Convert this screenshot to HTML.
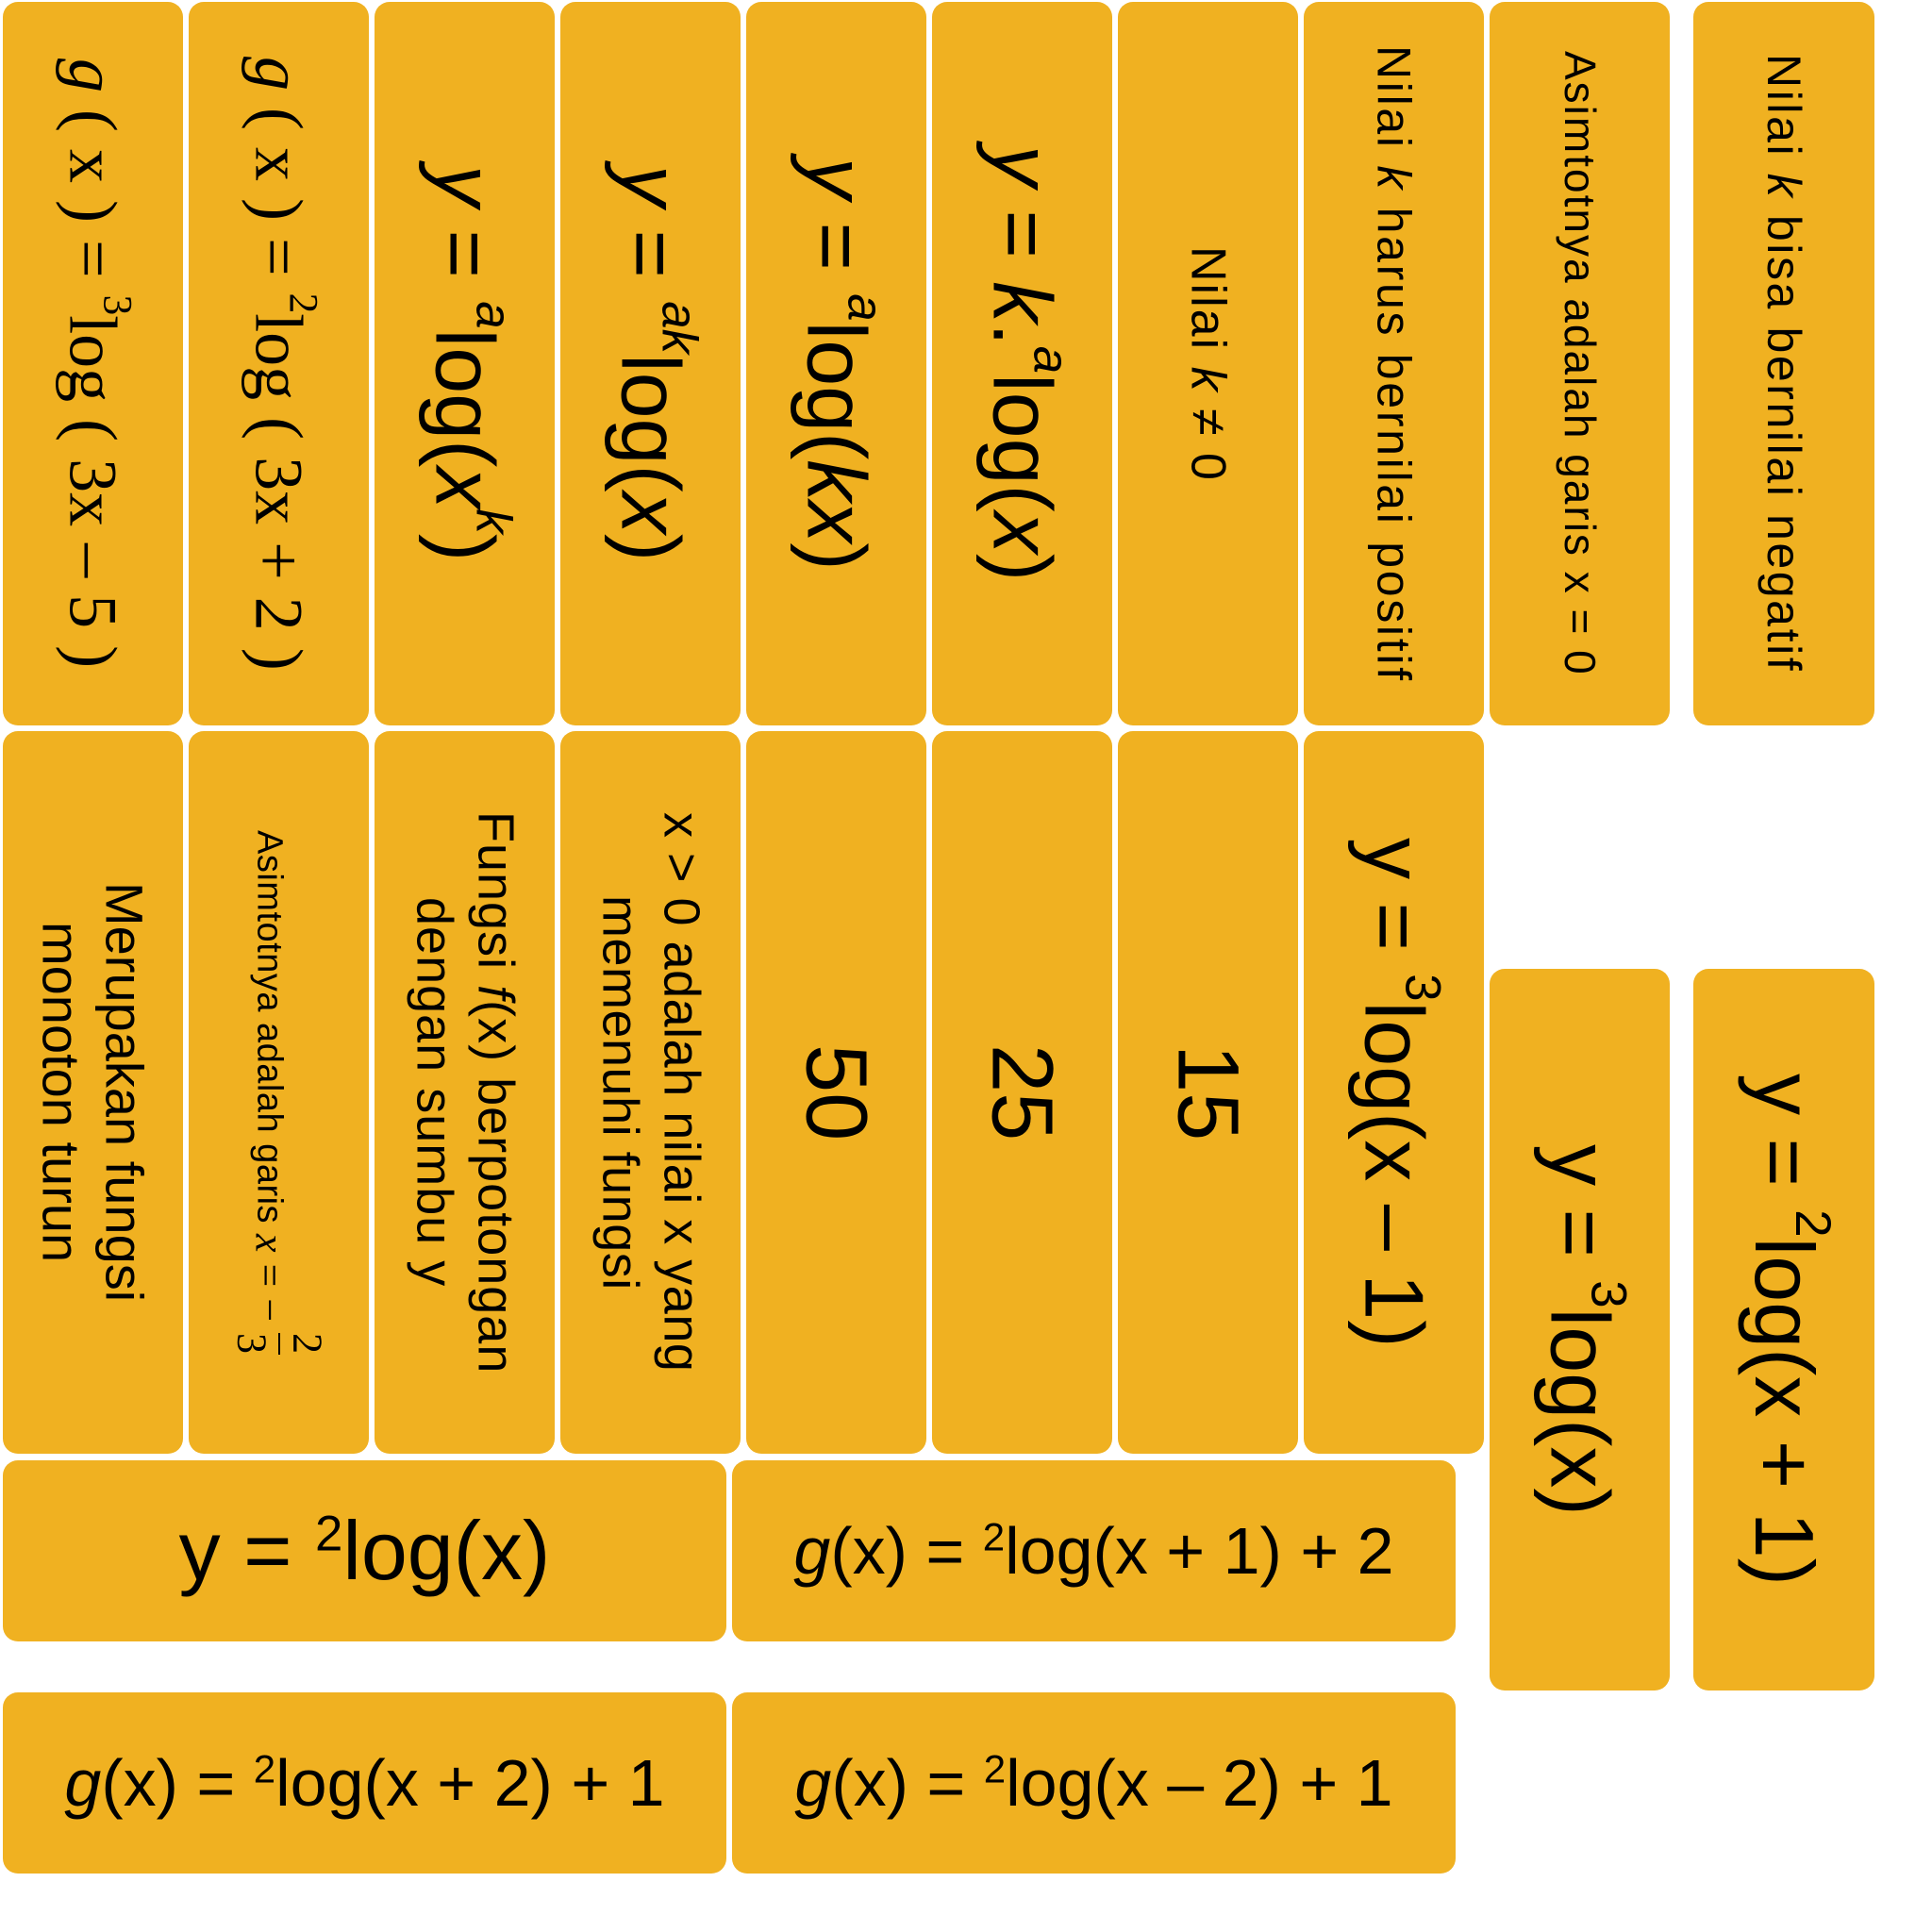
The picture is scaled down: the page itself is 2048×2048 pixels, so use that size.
<!DOCTYPE html>
<html><head><meta charset="utf-8"><style>
html,body{margin:0;padding:0;background:#fff;width:2048px;height:2048px;overflow:hidden}
.c{position:absolute;background:#F0B121;border-radius:16px;display:flex;align-items:center;justify-content:center;color:#000;font-family:"Liberation Sans",sans-serif}
.v{writing-mode:vertical-rl;white-space:nowrap;text-align:center;line-height:1.2}
.h{white-space:nowrap}
.s{font-family:"Liberation Serif",serif;font-size:72px}
.b{font-size:88px}
sup{font-size:.6em;vertical-align:super;line-height:0}
i{font-style:italic}
.fr{display:inline-block;vertical-align:middle}
.fr span{display:block;padding:0 2px}
.fr span:first-child{border-left:2px solid #000}
</style></head><body>
<!-- row 1 -->
<div class="c" style="left:3px;top:2px;width:191px;height:767px"><div class="v s"><i>g</i> ( x ) = <sup>3</sup>log ( 3x – 5 )</div></div>
<div class="c" style="left:200px;top:2px;width:191px;height:767px"><div class="v s"><i>g</i> ( x ) = <sup>2</sup>log ( 3x + 2 )</div></div>
<div class="c" style="left:397px;top:2px;width:191px;height:767px"><div class="v b"><i>y</i> = <sup><i>a</i></sup>log(<i>x</i><sup><i>k</i></sup>)</div></div>
<div class="c" style="left:594px;top:2px;width:191px;height:767px"><div class="v b"><i>y</i> = <sup><i>ak</i></sup>log(<i>x</i>)</div></div>
<div class="c" style="left:791px;top:2px;width:191px;height:767px"><div class="v b"><i>y</i> = <sup><i>a</i></sup>log(<i>kx</i>)</div></div>
<div class="c" style="left:988px;top:2px;width:191px;height:767px"><div class="v b"><i>y</i> = <i>k</i>.<sup><i>a</i></sup>log(<i>x</i>)</div></div>
<div class="c" style="left:1185px;top:2px;width:191px;height:767px"><div class="v" style="font-size:52px;letter-spacing:2px">Nilai <i>k</i> ≠ 0</div></div>
<div class="c" style="left:1382px;top:2px;width:191px;height:767px"><div class="v" style="font-size:50px;letter-spacing:2.7px">Nilai <i>k</i> harus bernilai positif</div></div>
<div class="c" style="left:1579px;top:2px;width:191px;height:767px"><div class="v" style="font-size:46px;letter-spacing:2px">Asimtotnya adalah garis x = 0</div></div>
<div class="c" style="left:1795px;top:2px;width:192px;height:767px"><div class="v" style="font-size:50px;letter-spacing:2.6px">Nilai <i>k</i> bisa bernilai negatif</div></div>
<!-- row 2 -->
<div class="c" style="left:3px;top:775px;width:191px;height:766px"><div class="v" style="font-size:56px">Merupakan fungsi<br>monoton turun</div></div>
<div class="c" style="left:200px;top:775px;width:191px;height:766px"><div class="v" style="font-size:38px;letter-spacing:0.5px">Asimtotnya adalah garis <span style="font-family:'Liberation Serif',serif;font-size:44px"><i>x</i> = − <span class="fr"><span>2</span><span>3</span></span></span></div></div>
<div class="c" style="left:397px;top:775px;width:191px;height:766px"><div class="v" style="font-size:54px;letter-spacing:1px">Fungsi <i>f</i>(x) berpotongan<br>dengan sumbu y</div></div>
<div class="c" style="left:594px;top:775px;width:191px;height:766px"><div class="v" style="font-size:54px;letter-spacing:0.5px">x &gt; 0 adalah nilai x yang<br>memenuhi fungsi</div></div>
<div class="c" style="left:791px;top:775px;width:191px;height:766px"><div class="v" style="font-size:92px">50</div></div>
<div class="c" style="left:988px;top:775px;width:191px;height:766px"><div class="v" style="font-size:92px">25</div></div>
<div class="c" style="left:1185px;top:775px;width:191px;height:766px"><div class="v" style="font-size:92px">15</div></div>
<div class="c" style="left:1382px;top:775px;width:191px;height:766px"><div class="v b">y = <sup>3</sup>log(x – 1)</div></div>
<div class="c" style="left:1579px;top:1027px;width:191px;height:765px"><div class="v b">y = <sup>3</sup>log(x)</div></div>
<div class="c" style="left:1795px;top:1027px;width:192px;height:765px"><div class="v b">y = <sup>2</sup>log(x + 1)</div></div>
<!-- rows 3-4 -->
<div class="c" style="left:3px;top:1548px;width:767px;height:192px"><div class="h b">y = <sup>2</sup>log(x)</div></div>
<div class="c" style="left:776px;top:1548px;width:767px;height:192px"><div class="h" style="font-size:70px"><i>g</i>(x) = <sup>2</sup>log(x + 1) + 2</div></div>
<div class="c" style="left:3px;top:1794px;width:767px;height:192px"><div class="h" style="font-size:70px"><i>g</i>(x) = <sup>2</sup>log(x + 2) + 1</div></div>
<div class="c" style="left:776px;top:1794px;width:767px;height:192px"><div class="h" style="font-size:70px"><i>g</i>(x) = <sup>2</sup>log(x – 2) + 1</div></div>
</body></html>
